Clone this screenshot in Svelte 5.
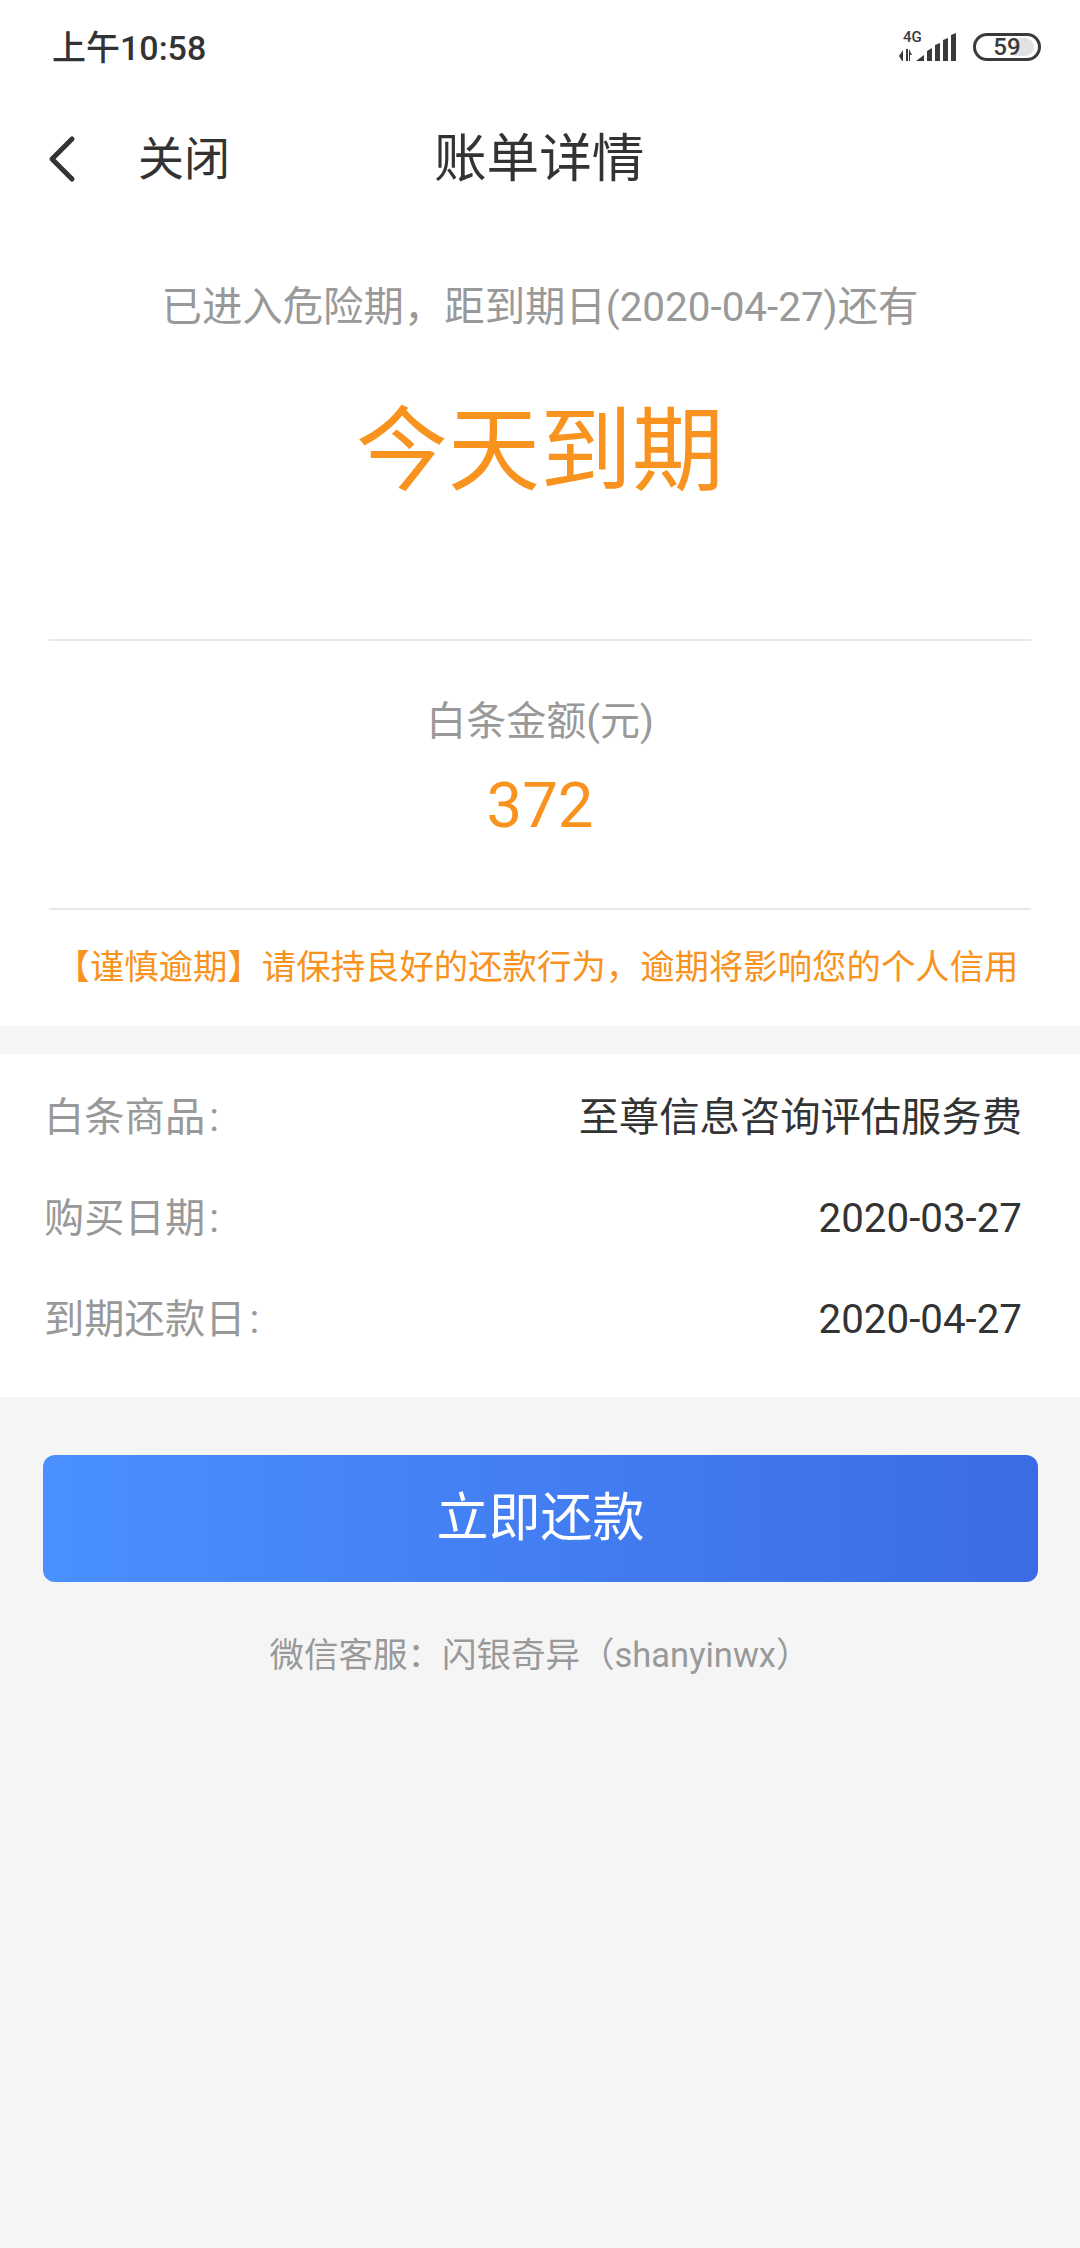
<script>
  const details = [
    { label: "白条商品", value: "至尊信息咨询评估服务费" },
    { label: "购买日期", value: "2020-03-27" },
    { label: "到期还款日", value: "2020-04-27" },
  ];
</script>

<div class="page">
  <header class="status">
    <span class="time">上午10:58</span>
    <div class="indicators">
      <svg class="signal" width="58" height="34" viewBox="0 -4 58 34" aria-hidden="true">
        <text x="4" y="10" class="net">4G</text>
        <path d="M0 24 L4 18 V29 H3 Z M7 17 H9 V29 H7 Z M10 17 L13 23 H11 V29 H10 Z" fill="#3a3a3a" />
        <path d="M17 29 L25 23 V29 Z M28 19 L33 16 V29 H28 Z M36 13 L41 11 V29 H36 Z M44 8 L49 6 V29 H44 Z M52 3 L57 1 V29 H52 Z" fill="#3a3a3a" />
      </svg>
      <div class="battery">
        <span class="level"></span>
        <span class="num">59</span>
      </div>
    </div>
  </header>

  <nav class="topbar">
    <svg class="back" width="30" height="48" viewBox="0 0 30 48" aria-hidden="true">
      <path d="M25 4 L5 24 L25 44" fill="none" stroke="#333" stroke-width="5" stroke-linecap="round" stroke-linejoin="round" />
    </svg>
    <span class="close">关闭</span>
    <span class="title">账单详情</span>
  </nav>

  <section class="summary">
    <p class="due-note">已进入危险期，距到期日(2020-04-27)还有</p>
    <p class="due-big">今天到期</p>
    <div class="amount">
      <p class="amount-label">白条金额(元)</p>
      <p class="amount-num">372</p>
    </div>
    <p class="warn">【谨慎逾期】请保持良好的还款行为，逾期将影响您的个人信用</p>
  </section>

  <section class="details">
    {#each details as row}
      <div class="row">
        <span class="label">{row.label}<span class="colon">:</span></span>
        <span class="value">{row.value}</span>
      </div>
    {/each}
  </section>

  <button class="pay">立即还款</button>
  <p class="service">微信客服：闪银奇异（shanyinwx）</p>
</div>

<style>
  :global(body) {
    margin: 0;
    background: #f5f5f5;
  }

  .page {
    min-height: 2248px;
    background: #f5f5f5;
    font-family: Roboto, "Noto Sans CJK SC", sans-serif;
    color: #333;
  }

  p {
    margin: 0;
  }

  .status {
    height: 93px;
    box-sizing: border-box;
    padding: 0 39px 0 52px;
    background: #fff;
    display: flex;
    align-items: center;
    justify-content: space-between;
  }

  .time {
    margin-top: 3px;
    font-size: 34px;
    line-height: 40px;
    font-weight: 500;
    color: #333;
  }

  .indicators {
    display: flex;
    align-items: center;
    gap: 16px;
    margin-top: 1px;
  }

  .signal {
    margin-top: -4px;
  }

  .net {
    font: 500 15px Roboto, sans-serif;
    fill: #3a3a3a;
  }

  .battery {
    position: relative;
    width: 68px;
    height: 28px;
    box-sizing: border-box;
    border: 3px solid #3a3a3a;
    border-radius: 14px;
    overflow: hidden;
    display: flex;
    align-items: center;
    justify-content: center;
  }

  .level {
    position: absolute;
    inset: 2px 4px 2px 2px;
    background: linear-gradient(90deg, #fff 65%, #e2e2e2 65%);
    border-radius: 10px;
  }

  .num {
    position: relative;
    font-size: 24px;
    line-height: 22px;
    font-weight: 500;
    color: #3a3a3a;
  }

  .topbar {
    height: 124px;
    position: relative;
    background: #fff;
    display: flex;
    align-items: center;
    padding-left: 47px;
  }

  .back {
    margin-top: 8px;
  }

  .close {
    margin: 8px 0 0 61px;
    font-size: 46px;
    line-height: 60px;
    color: #333;
  }

  .title {
    position: absolute;
    left: 434px;
    margin-top: 8px;
    font-size: 52.6px;
    line-height: 60px;
    color: #333;
  }

  .summary {
    background: #fff;
    height: 809px;
    box-sizing: border-box;
    padding-top: 65px;
    text-align: center;
  }

  .due-note {
    font-size: 40.4px;
    line-height: 52px;
    color: #999;
  }

  .due-big {
    margin-top: 52px;
    font-size: 92px;
    line-height: 132px;
    color: #f7931e;
  }

  .amount {
    margin: 121px 49px 0;
    height: 271px;
    box-sizing: border-box;
    border-top: 2px solid #e8e8e8;
    border-bottom: 2px solid #e8e8e8;
    padding-top: 55px;
  }

  .amount-label {
    font-size: 40px;
    line-height: 52px;
    color: #999;
  }

  .amount-num {
    margin-top: 20px;
    font-size: 63.5px;
    line-height: 76px;
    color: #f7931e;
  }

  .warn {
    margin-top: 32px;
    padding-right: 6px;
    font-size: 34.4px;
    line-height: 50px;
    color: #f7931e;
  }

  .details {
    margin-top: 28px;
    height: 343px;
    box-sizing: border-box;
    padding: 13px 45px 0;
    background: #fff;
  }

  .row {
    height: 101px;
    display: flex;
    align-items: center;
    justify-content: space-between;
    font-size: 40.3px;
    line-height: 52px;
  }

  .label {
    color: #999;
    margin-left: -1px;
  }

  .colon {
    margin-left: 4px;
  }

  .value {
    color: #333;
    padding-right: 13px;
  }

  .pay {
    display: block;
    margin: 58px 0 0 43px;
    width: 995px;
    height: 127px;
    padding-bottom: 11px;
    border: none;
    border-radius: 12px;
    background: linear-gradient(90deg, #4a90ff, #3b6ce4);
    color: #fff;
    font-family: inherit;
    font-size: 52px;
  }

  .service {
    margin-top: 50px;
    text-align: center;
    font-size: 34.5px;
    line-height: 46px;
    color: #999;
  }
</style>
